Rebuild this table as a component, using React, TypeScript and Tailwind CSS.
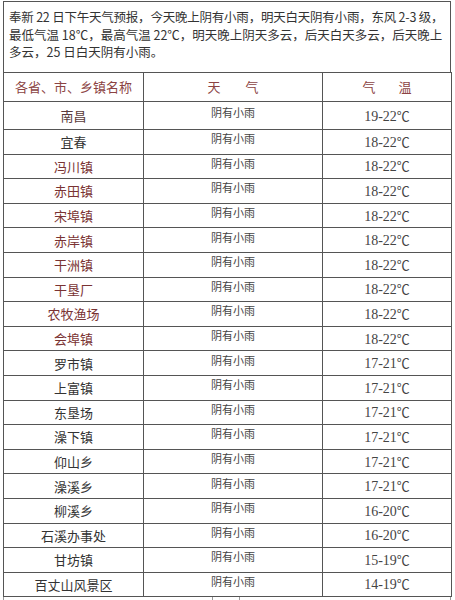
const rows: { name: string; temp: string; red?: boolean; tone?: string }[] = [
  { name: '南昌', temp: '19-22', tone: 'text-[#5a3b3b]' },
  { name: '宜春', temp: '18-22' },
  { name: '冯川镇', temp: '18-22', red: true },
  { name: '赤田镇', temp: '18-22', red: true },
  { name: '宋埠镇', temp: '18-22', red: true },
  { name: '赤岸镇', temp: '18-22', red: true },
  { name: '干洲镇', temp: '18-22', red: true },
  { name: '干垦厂', temp: '18-22', red: true },
  { name: '农牧渔场', temp: '18-22', red: true },
  { name: '会埠镇', temp: '18-22', red: true },
  { name: '罗市镇', temp: '17-21' },
  { name: '上富镇', temp: '17-21' },
  { name: '东垦场', temp: '17-21' },
  { name: '澡下镇', temp: '17-21' },
  { name: '仰山乡', temp: '17-21' },
  { name: '澡溪乡', temp: '17-21' },
  { name: '柳溪乡', temp: '16-20' },
  { name: '石溪办事处', temp: '16-20' },
  { name: '甘坊镇', temp: '15-19' },
  { name: '百丈山风景区', temp: '14-19' },
]

const cjk = "font-['Noto_Sans_CJK_SC',sans-serif]"

export default function App() {
  return (
    <div className={`w-[455px] h-[600px] overflow-hidden bg-white pt-[1px] pl-[3px] ${cjk}`}>
      {/* 说明文字 */}
      <div className="w-[448px] h-[71px] border-t border-x border-[#555] pl-[5px] pt-[6px] text-[12.5px] leading-[17.5px] text-[#333] whitespace-nowrap">
        <div className="tracking-[-0.22px]">奉新 22 日下午天气预报，今天晚上阴有小雨，明天白天阴有小雨，东风 2-3 级，</div>
        <div className="tracking-[0px]">最低气温 18℃，最高气温 22℃，明天晚上阴天多云，后天白天多云，后天晚上</div>
        <div className="tracking-[0px]">多云，25 日白天阴有小雨。</div>
      </div>

      <table className="w-[448px] table-fixed border-collapse">
        <colgroup>
          <col className="w-[140px]" />
          <col className="w-[179px]" />
          <col className="w-[129px]" />
        </colgroup>
        <thead>
          <tr className="h-[29px] text-[13px] text-[#8b4343]">
            <th className="border border-[#555] font-normal">各省、市、乡镇名称</th>
            <th className="border border-[#555] font-normal">
              <span>天</span>
              <span className="ml-[25px]">气</span>
            </th>
            <th className="border border-[#555] font-normal">
              <span>气</span>
              <span className="ml-[23px]">温</span>
            </th>
          </tr>
        </thead>
        <tbody>
          {rows.map((r, i) => (
            <tr key={r.name} className={i === 0 ? 'h-[28px]' : 'h-[24.6px]'}>
              <td
                className={`border border-[#555] p-0 text-center text-[13px] leading-none ${
                  r.red ? 'text-[#7a3333]' : r.tone ?? 'text-[#333]'
                }`}
              >
                {r.name}
              </td>
              <td className="border border-[#555] p-0 pb-[6px] text-center text-[11px] leading-none text-[#444]">
                阴有小雨
              </td>
              <td className="border border-[#555] p-0 pb-[2px] text-center leading-none text-[#444]">
                <span className="font-['Liberation_Serif',serif] text-[14px]">{r.temp}</span>
                <span className="text-[13px]">℃</span>
              </td>
            </tr>
          ))}
        </tbody>
      </table>

      {/* 下一张表的顶部 */}
      <div className="flex w-[448px] h-[10px] border-x border-[#999]">
        <div className="w-[209px] border-r border-[#999]" />
        <div className="w-[27px] border-r border-[#999]" />
      </div>
    </div>
  )
}
